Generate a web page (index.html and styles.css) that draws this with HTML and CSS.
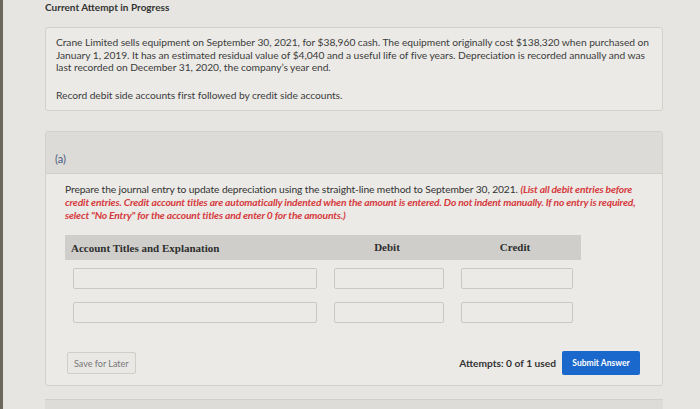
FILE: index.html
```html
<!DOCTYPE html>
<html>
<head>
<meta charset="utf-8">
<link rel="stylesheet" href="styles.css">
</head>
<body>
<div class="edge"></div>
<main class="page">
  <h1 class="title">Current Attempt in Progress</h1>
  <section class="problem">
    <p class="ptext">Crane Limited sells equipment on September 30, 2021, for $38,960 cash. The equipment originally cost $138,320 when purchased on January 1, 2019. It has an estimated residual value of $4,040 and a useful life of five years. Depreciation is recorded annually and was last recorded on December 31, 2020, the company’s year end.</p>
    <p class="ptext">Record debit side accounts first followed by credit side accounts.</p>
  </section>
  <section class="part">
    <div class="part-head"><span class="part-label">(a)</span></div>
    <div class="part-body">
      <p class="prompt">Prepare the journal entry to update depreciation using the straight-line method to September 30, 2021. <em class="note">(List all debit entries before<br>credit entries. Credit account titles are automatically indented when the amount is entered. Do not indent manually. If no entry is required,<br>select "No Entry" for the account titles and enter 0 for the amounts.)</em></p>
      <div class="table">
        <div class="thead">
          <div class="th th-acc">Account Titles and Explanation</div>
          <div class="th th-num">Debit</div>
          <div class="th th-num">Credit</div>
        </div>
        <div class="row">
          <div class="inp inp-acc"></div>
          <div class="inp inp-deb"></div>
          <div class="inp inp-cre"></div>
        </div>
        <div class="row">
          <div class="inp inp-acc"></div>
          <div class="inp inp-deb"></div>
          <div class="inp inp-cre"></div>
        </div>
      </div>
      <div class="actions">
        <button class="btn-save">Save for Later</button>
        <div class="right">
          <span class="attempts">Attempts: 0 of 1 used</span>
          <button class="btn-submit">Submit Answer</button>
        </div>
      </div>
    </div>
  </section>
  <div class="next"></div>
</main>
</body>
</html>
```
FILE: styles.css
```css
html, body {
  margin: 0;
  padding: 0;
}
body {
  width: 700px;
  height: 409px;
  overflow: hidden;
  background: #e6e5e1;
  font-family: Lato, "Open Sans", sans-serif;
  color: #3a3a3a;
  display: flex;
}
.edge {
  width: 3px;
  background: #6d665c;
  flex: none;
}
.page {
  flex: none;
  width: 618px;
  padding-left: 42px;
}
.title {
  margin: 0;
  padding-top: 1px;
  height: 26px;
  font-size: 10px;
  font-weight: 700;
  color: #333;
  line-height: 13px;
}
.problem {
  box-sizing: border-box;
  width: 618px;
  height: 84px;
  border: 1px solid #d2d1cc;
  border-radius: 3px;
  background: #ebeae6;
  padding: 8px 10px 0 10px;
}
.ptext {
  margin: 0 0 15px 0;
  width: 598px;
  font-size: 10.25px;
  line-height: 12.5px;
  color: #3c3c3c;
  letter-spacing: -0.05px;
}
.part {
  box-sizing: border-box;
  width: 618px;
  margin-top: 20px;
  height: 255px;
  border: 1px solid #d2d1cc;
  border-radius: 3px;
  background: #ebeae6;
}
.part-head {
  height: 41px;
  background: #dcdbd7;
  border-bottom: 1px solid #d0cfca;
  padding-left: 9px;
  display: flex;
  align-items: flex-end;
}
.part-label {
  font-size: 11px;
  color: #4a5a82;
  padding-bottom: 8px;
}
.part-body {
  padding: 9px 0 0 19px;
}
.prompt {
  margin: 0;
  width: 595px;
  font-size: 10.25px;
  line-height: 13px;
  color: #333;
  letter-spacing: -0.1px;
}
.note {
  color: #d63a3e;
  font-weight: 700;
  font-size: 10.3px;
  letter-spacing: -0.18px;
}
.table {
  margin-top: 13px;
  width: 516px;
}
.thead {
  height: 25px;
  background: #cfcecb;
  display: flex;
  align-items: center;
}
.th {
  font-family: "Liberation Serif", "DejaVu Serif", serif;
  font-weight: 700;
  font-size: 11px;
  color: #2e2e2e;
}
.th-acc {
  width: 258px;
  padding-left: 6px;
  box-sizing: border-box;
}
.th-num {
  width: 128px;
  text-align: center;
  padding-bottom: 2px;
}
.row {
  display: flex;
  margin-top: 8px;
  padding-left: 8px;
}
.row + .row {
  margin-top: 13px;
}
.inp {
  box-sizing: border-box;
  height: 21px;
  border: 1px solid #c9c8c3;
  border-radius: 2px;
  background: #ebeae6;
}
.inp-acc {
  width: 244px;
  margin-right: 17px;
}
.inp-deb {
  width: 110px;
  margin-right: 17px;
}
.inp-cre {
  width: 112px;
}
.actions {
  margin-top: 28px;
  width: 575px;
  display: flex;
  justify-content: space-between;
  align-items: center;
}
.btn-save {
  font-family: Lato, sans-serif;
  font-size: 9px;
  color: #777;
  background: #e9e8e4;
  border: 1px solid #cfcec9;
  border-radius: 2px;
  height: 22px;
  padding: 0 6px;
  margin-left: 2px;
}
.right {
  display: flex;
  align-items: center;
  gap: 6px;
}
.attempts {
  font-size: 10.2px;
  font-weight: 700;
  color: #333;
}
.btn-submit {
  font-family: Lato, sans-serif;
  font-size: 8.5px;
  font-weight: 700;
  color: #fff;
  background: #1a68cc;
  border: none;
  border-radius: 2px;
  height: 24px;
  width: 78px;
  padding: 0;
}
.next {
  margin-top: 13px;
  height: 12px;
  width: 618px;
  background: #dddcd8;
  border-top: 1px solid #d0cfca;
}
```
